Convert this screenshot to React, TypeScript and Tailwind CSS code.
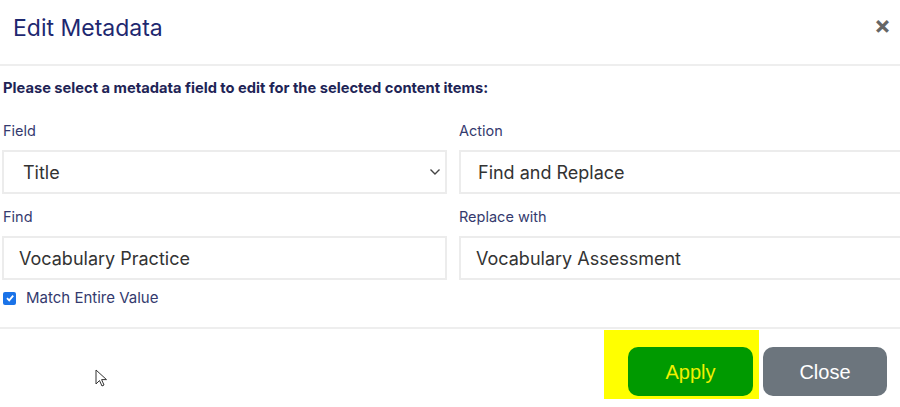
import React from 'react';

const font = { fontFamily: 'Inter, "Liberation Sans", sans-serif' };

const Chevron = () => (
  <svg width="12" height="8" viewBox="0 0 12 8" className="text-[#444]">
    <path d="M1.5 1.5 L6 6 L10.5 1.5" fill="none" stroke="currentColor" strokeWidth="1.4" />
  </svg>
);

const SelectBox = ({ value, pad }: { value: string; pad: string }) => (
  <div className={`h-[44px] border-2 border-[#ececec] flex items-center justify-between pr-[4px] ${pad}`}>
    <span className="text-[18px] text-[#333]">{value}</span>
    <Chevron />
  </div>
);

const TextBox = ({ value }: { value: string }) => (
  <div className="h-[44px] border-2 border-[#ececec] flex items-center pl-[15px]">
    <span className="text-[18px] text-[#333]">{value}</span>
  </div>
);

export default function App() {
  return (
    <div className="w-[900px] h-[407px] bg-white overflow-hidden relative" style={font}>
      {/* Header */}
      <div className="h-[66px] border-b-2 border-[#eeeeee] flex items-start justify-between pl-[13px] pr-[9px] pt-[12px]">
        <h1 className="text-[23px] text-[#1e2870] leading-[32px]">Edit Metadata</h1>
        <button className="text-[25px] font-bold text-[#666] leading-none mt-[1px]">×</button>
      </div>

      {/* Body */}
      <div className="pl-[2px] pt-[12px] h-[263px] border-b-2 border-[#eeeeee]">
        <p className="text-[14.7px] font-bold text-[#1e2456] pl-[1px] leading-[20px]">
          Please select a metadata field to edit for the selected content items:
        </p>
        <div className="grid grid-cols-[445px_445px] gap-x-[12px] mt-[23px]">
          <label className="text-[14.5px] text-[#343a6e] pl-[1px] leading-[20px] mb-[9px]">Field</label>
          <label className="text-[14.5px] text-[#343a6e] leading-[20px] mb-[9px]">Action</label>
          <SelectBox value="Title" pad="pl-[19px]" />
          <div className="w-[460px]">
            <SelectBox value="Find and Replace" pad="pl-[17px]" />
          </div>
          <label className="text-[14.5px] text-[#343a6e] pl-[1px] leading-[20px] mt-[13px] mb-[9px]">Find</label>
          <label className="text-[14.5px] text-[#343a6e] leading-[20px] mt-[13px] mb-[9px]">Replace with</label>
          <TextBox value="Vocabulary Practice" />
          <div className="w-[460px]">
            <TextBox value="Vocabulary Assessment" />
          </div>
        </div>
        <div className="flex items-center gap-[10px] mt-[7px] pl-[1px]">
          <span className="w-[13px] h-[13px] rounded-[2px] bg-[#1a73e8] flex items-center justify-center">
            <svg width="10" height="10" viewBox="0 0 10 10">
              <path d="M2 5.2 L4.2 7.4 L8.2 2.6" fill="none" stroke="white" strokeWidth="1.8" />
            </svg>
          </span>
          <span className="text-[15px] text-[#343a6e]">Match Entire Value</span>
        </div>
      </div>

      {/* Footer */}
      <div className="flex justify-end items-start pt-[1px] pr-[13px]">
        <div className="bg-[#ffff00] w-[155px] h-[69px] flex items-end justify-end pr-[6px] pb-[3px]">
          <button
            className="w-[125px] h-[49px] rounded-[10px] bg-[#009a00] text-[#f0f000] text-[20px]"
            style={{ fontFamily: '"Liberation Sans", Arial, sans-serif' }}
          >
            Apply
          </button>
        </div>
        <button
          className="ml-[4px] mt-[17px] w-[124px] h-[49px] rounded-[10px] bg-[#6c757d] text-white text-[20px]"
          style={{ fontFamily: '"Liberation Sans", Arial, sans-serif' }}
        >
          Close
        </button>
      </div>

      {/* mouse cursor */}
      <svg className="absolute left-[95px] top-[369px]" width="14" height="20" viewBox="0 0 14 20">
        <path d="M1 1 L1 15 L4.5 11.5 L7 17 L9 16 L6.6 10.6 L11.5 10.6 Z" fill="white" stroke="#333" strokeWidth="1" />
      </svg>
    </div>
  );
}
